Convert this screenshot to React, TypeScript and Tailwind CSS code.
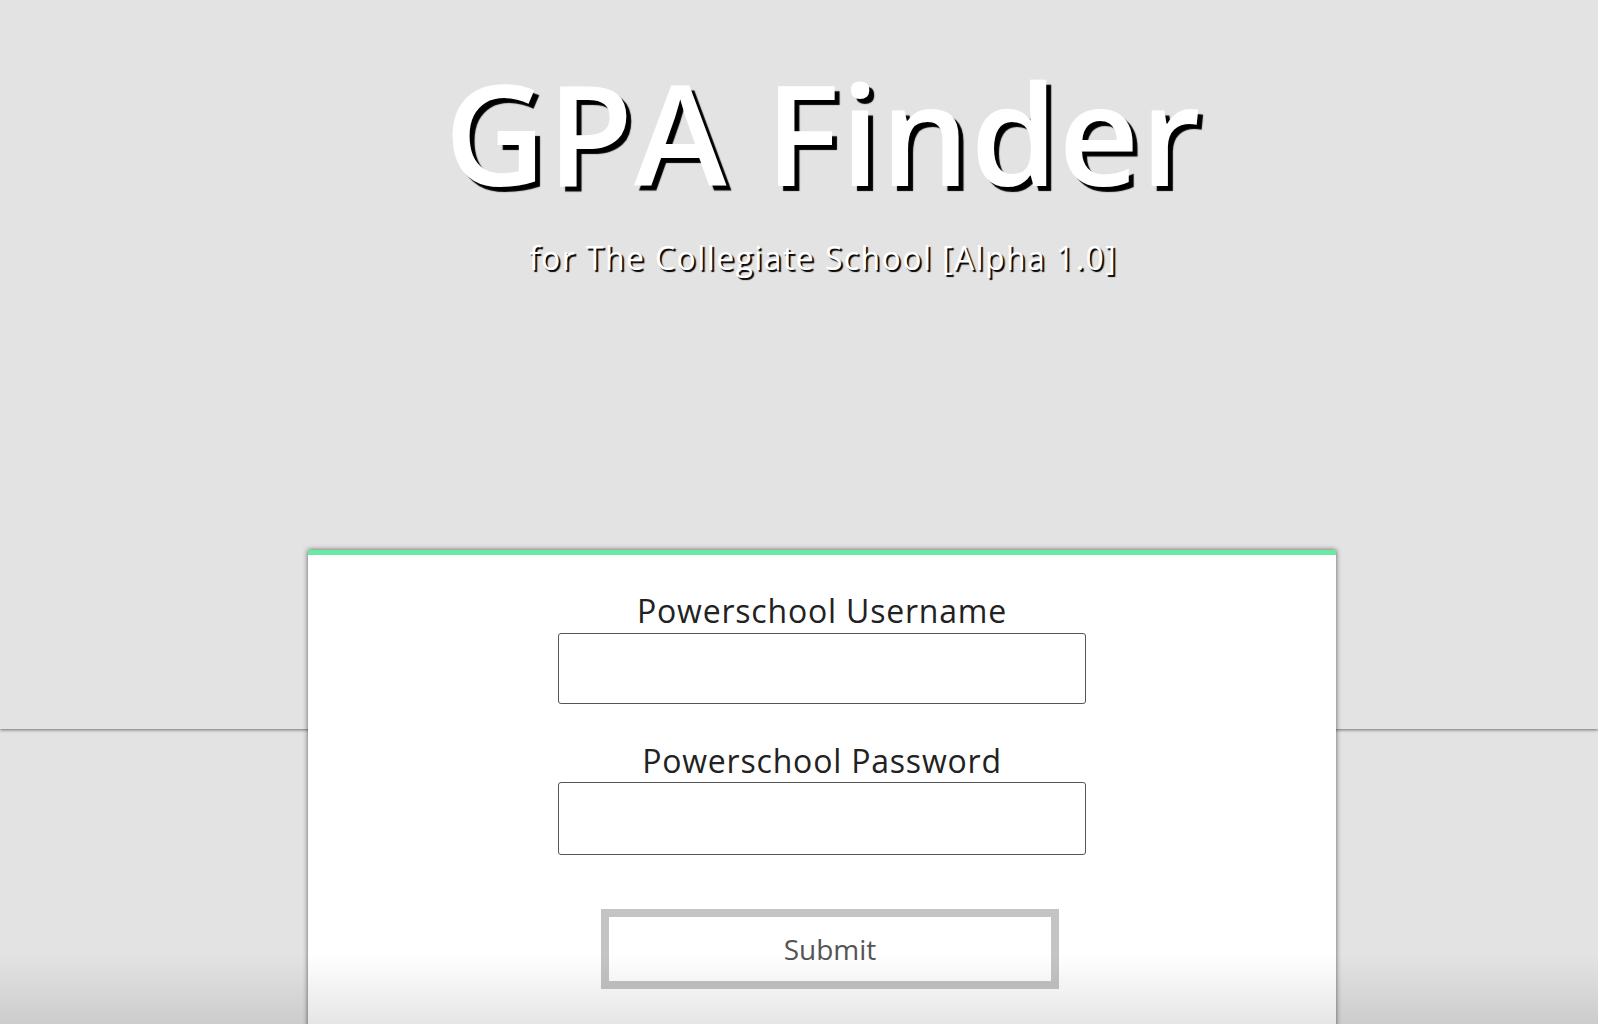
import { useState } from "react";

function LoginCard() {
  const [username, setUsername] = useState("");
  const [password, setPassword] = useState("");

  return (
    <form
      onSubmit={(e) => e.preventDefault()}
      className="relative z-10 -mt-[179px] ml-[308px] flex h-[520px] w-[1028px] flex-col items-center border-t-[5px] border-[#69eaa2] bg-white pt-[37px] shadow-[0_0_5px_rgba(0,0,0,0.6)]"
    >
      <label className="text-[32px] leading-[38px] tracking-[0.8px] text-[#222]">
        Powerschool Username
      </label>
      <input
        type="text"
        value={username}
        onChange={(e) => setUsername(e.target.value)}
        className="mt-[3px] h-[71px] w-[528px] rounded-[3px] border border-[#555] bg-white px-3 text-2xl outline-none"
      />
      <label className="mt-[38px] text-[32px] leading-[38px] tracking-[0.8px] text-[#222]">
        Powerschool Password
      </label>
      <input
        type="password"
        value={password}
        onChange={(e) => setPassword(e.target.value)}
        className="mt-[2px] h-[73px] w-[528px] rounded-[3px] border border-[#555] bg-white px-3 text-2xl outline-none"
      />
      <button
        type="submit"
        className="mt-[54px] ml-[16px] h-[80px] w-[458px] border-[8px] border-[#c4c4c4] bg-white text-[28px] text-[#555]"
      >
        Submit
      </button>
    </form>
  );
}

export default function App() {
  return (
    <div
      className="relative h-[1024px] overflow-hidden bg-[#e3e3e3]"
      style={{ fontFamily: "'Open Sans', Lato, sans-serif" }}
    >
      <header className="relative h-[729px] shadow-[0_1px_3px_rgba(0,0,0,0.5)]">
        <div className="flex flex-col items-center pl-[48px] pt-[62px]">
          <h1 className="text-[140px] font-semibold leading-[140px] tracking-[1px] text-white [text-shadow:5px_5px_1px_#000]">
            GPA Finder
          </h1>
          <p className="mt-[37px] text-[32px] leading-[38px] tracking-[1.4px] text-white [text-shadow:2px_2px_1px_#000]">
            for The Collegiate School [Alpha 1.0]
          </p>
        </div>
      </header>
      <LoginCard />
      <div className="pointer-events-none absolute bottom-0 left-0 right-0 z-20 h-[70px] bg-gradient-to-b from-transparent to-black/10" />
    </div>
  );
}
